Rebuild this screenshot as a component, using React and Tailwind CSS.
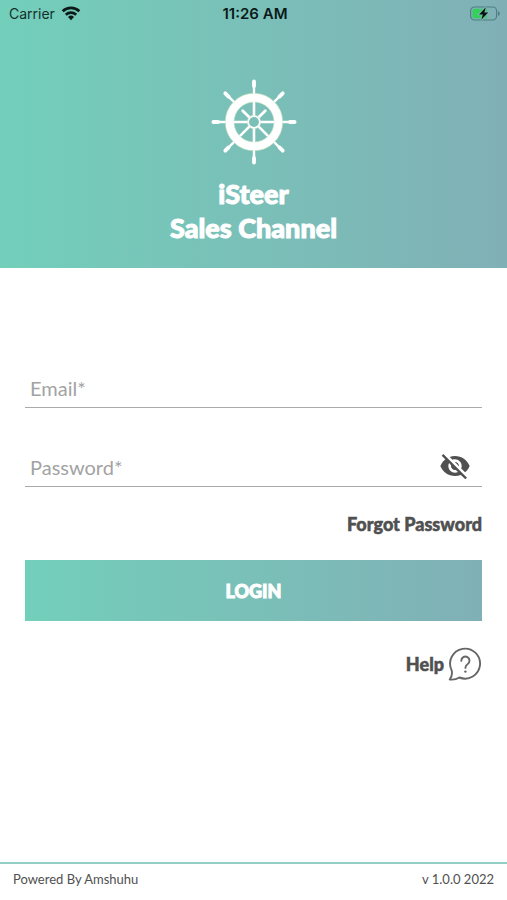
import { useState } from 'react';
import { MdVisibility, MdVisibilityOff } from 'react-icons/md';

const SPOKES = [0, 45, 90, 135, 180, 225, 270, 315];

const WifiIcon = () => (
  <svg className="w-5 h-4" viewBox="0 0 20 16" fill="none" stroke="#0b1a18" aria-hidden="true">
    <path d="M1.7 5.2a12 12 0 0 1 16.6 0" strokeWidth="2.8" />
    <path d="M4.8 8.7a7.6 7.6 0 0 1 10.4 0" strokeWidth="2.6" />
    <path d="M10 14.2l-3-3.2a4.3 4.3 0 0 1 6 0z" fill="#0b1a18" stroke="none" />
  </svg>
);

const BatteryIcon = () => (
  <svg className="w-8 h-4" viewBox="0 0 32 16" aria-hidden="true">
    <rect x="1.6" y="1" width="26" height="13" rx="4" fill="none" stroke="#4f7f80" strokeWidth="1.2" />
    <path d="M29 5.3v4.6c1.1-.4 1.8-1.2 1.8-2.3s-.7-1.9-1.8-2.3z" fill="#4f7f80" />
    <path d="M5.6 2.8H18v9.4H5.6A2.2 2.2 0 0 1 3.4 10V5a2.2 2.2 0 0 1 2.2-2.200z" fill="#35d05c" />
    <path d="M16.800 1.200L10.100 8.400h3.700L12.300 13.800l6.900-7.400h-3.800z" fill="#06140f" stroke="#7cb9b4" strokeWidth="1.800" paintOrder="stroke" />
  </svg>
);

const WheelLogo = () => (
  <svg className="w-[86px] h-[86px]" viewBox="-43 -43 86 86" aria-hidden="true">
    <circle r="24.300" fill="none" stroke="#fff" strokeWidth="8.400" />
    <circle r="28.700" fill="none" stroke="#d8edc4" strokeWidth="0.600" />
    <circle r="20" fill="none" stroke="#d8edc4" strokeWidth="0.600" />
    {SPOKES.map(angle => (
      <g key={angle} transform={`rotate(${angle})`} stroke="#fff" strokeLinecap="round">
        {/* the upper diagonal spokes stop short of the rim */}
        {angle === 45 || angle === 315 ? (
          <path d="M0-7V-16" strokeWidth="2.800" />
        ) : (
          <path d="M0-7V-19" strokeWidth="2.600" />
        )}
        <path d="M0-29.500V-38" strokeWidth="2.400" />
        <path d="M0-36V-40.600" strokeWidth="3.800" />
      </g>
    ))}
    <circle r="5.800" fill="none" stroke="#fff" strokeWidth="1.700" />
    <circle r="6.800" fill="none" stroke="#d8edc4" strokeWidth="0.500" />
  </svg>
);

const HelpIcon = () => (
  <svg className="w-[34px] h-[34px]" viewBox="0 0 34 34" fill="none" stroke="#666" strokeLinecap="round" strokeLinejoin="round" aria-hidden="true">
    <path d="M3.600 23.200A15 15 0 1 1 11.400 30.500C8.500 32.300 5 33 1.700 32.500C3.500 30 4.600 26.800 3.600 23.200z" strokeWidth="1.900" />
    <path d="M13.300 13.700a4.100 4.100 0 1 1 6.200 3.500c-1.500.9-2.100 1.700-2.100 3.700" strokeWidth="1.900" />
    <circle cx="17.400" cy="24.600" r="1.200" fill="#666" stroke="none" />
  </svg>
);

const App = () => {
  const [email, setEmail] = useState('');
  const [password, setPassword] = useState('');
  const [showPassword, setShowPassword] = useState(false);

  return (
    <div className="min-h-screen flex flex-col bg-white font-['Lato',sans-serif] text-[#505050]">
      <header className="bg-linear-to-r from-[#72cfba] to-[#80b0b6] pb-[23px]">
        {/* Status bar */}
        <div className="grid grid-cols-3 items-center h-7 pl-[9px] pr-[6px] font-['Inter',sans-serif] text-sm text-[#14302c]">
          <div className="flex items-center gap-[6px]">
            <span>Carrier</span>
            <WifiIcon />
          </div>
          <span className="text-center text-[15px] font-semibold text-[#0b1a18]">11:26 AM</span>
          <div className="flex justify-end">
            <BatteryIcon />
          </div>
        </div>

        <div className="flex flex-col items-center pt-[51px]">
          <WheelLogo />
          <h1 className="mt-3 text-center text-[27px] leading-[34px] font-black text-white [-webkit-text-stroke:1px_currentColor]">
            iSteer
            <br />
            Sales Channel
          </h1>
        </div>
      </header>

      <main className="flex-1 px-[25px] pt-[99px]">
        <form onSubmit={e => e.preventDefault()}>
          <div className="border-b border-[#aaa]">
            <input
              type="email"
              aria-label="Email"
              placeholder="Email*"
              value={email}
              onChange={e => setEmail(e.target.value)}
              className="block w-full h-10 px-[5px] pt-[2px] text-xl outline-none placeholder:text-[#a3a3a3]"
            />
          </div>

          <div className="mt-[38px] flex items-center border-b border-[#aaa] pr-[11px]">
            <input
              type={showPassword ? 'text' : 'password'}
              aria-label="Password"
              placeholder="Password*"
              value={password}
              onChange={e => setPassword(e.target.value)}
              className="block min-w-0 flex-1 h-10 px-[5px] pt-[2px] text-xl outline-none placeholder:text-[#a3a3a3]"
            />
            <button type="button" aria-label="Toggle password visibility" onClick={() => setShowPassword(!showPassword)}>
              {showPassword ? <MdVisibility className="w-8 h-8" /> : <MdVisibilityOff className="w-8 h-8" />}
            </button>
          </div>

          <div className="mt-[23px] flex justify-end">
            <a href="#forgot" className="text-lg leading-7 font-black [-webkit-text-stroke:0.5px_currentColor]">Forgot Password</a>
          </div>

          <button type="submit" className="mt-[22px] w-full h-[61px] bg-linear-to-r from-[#72cfba] to-[#80b0b6] text-lg font-black text-white [-webkit-text-stroke:1px_currentColor]">
            LOGIN
          </button>
        </form>

        <div className="mt-[26px] flex justify-end">
          <a href="#help" className="flex items-center gap-1 text-lg font-black">
            <span className="[-webkit-text-stroke:0.5px_currentColor]">Help</span>
            <HelpIcon />
          </a>
        </div>
      </main>

      <footer className="flex items-center justify-between h-[38px] px-[13px] pb-1 border-t-2 border-[#93cfc3] text-[13px]">
        <span>Powered By Amshuhu</span>
        <span>v 1.0.0 2022</span>
      </footer>
    </div>
  );
};

export default App;
